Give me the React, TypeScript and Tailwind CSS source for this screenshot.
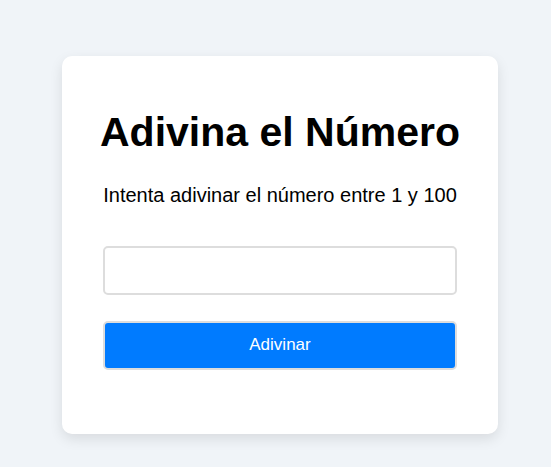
export default function App() {
  return (
    <main className="flex min-h-screen items-center justify-center bg-[#f0f4f8] pt-6 pr-4 pb-[2px] pl-[25px] font-['Liberation_Sans',Arial,sans-serif] text-black">
      <section className="w-full max-w-[436px] rounded-[10px] bg-white px-9 pt-11 pb-16 text-center shadow-[0_5px_13px_rgba(0,0,0,0.1)]">
        <h1 className="text-[41px] leading-[64px] font-bold">Adivina el Número</h1>
        <p className="mt-4 text-[20px] leading-[30px]">Intenta adivinar el número entre 1 y 100</p>
        <form className="mt-9 flex flex-col gap-[26px] px-[5px]" onSubmit={(e) => e.preventDefault()}>
          <input
            type="number"
            aria-label="Número"
            className="h-[49px] w-full rounded-[5px] border-2 border-[#dddddd] bg-white px-3 text-[17px]"
          />
          <button
            type="submit"
            className="h-[49px] w-full rounded-[5px] border-2 border-[#dddddd] bg-[#007bff] text-[17px] text-white"
          >
            Adivinar
          </button>
        </form>
      </section>
    </main>
  );
}
